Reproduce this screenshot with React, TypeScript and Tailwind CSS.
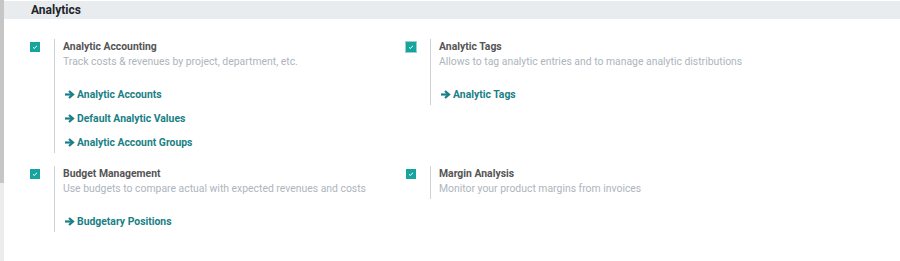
import React from "react";

type Setting = {
  title: string;
  desc: string;
  links: string[];
  focused?: boolean;
};

const rows: Setting[][] = [
  [
    {
      title: "Analytic Accounting",
      desc: "Track costs & revenues by project, department, etc.",
      links: ["Analytic Accounts", "Default Analytic Values", "Analytic Account Groups"],
    },
    {
      title: "Analytic Tags",
      desc: "Allows to tag analytic entries and to manage analytic distributions",
      links: ["Analytic Tags"],
      focused: true,
    },
  ],
  [
    {
      title: "Budget Management",
      desc: "Use budgets to compare actual with expected revenues and costs",
      links: ["Budgetary Positions"],
    },
    {
      title: "Margin Analysis",
      desc: "Monitor your product margins from invoices",
      links: [],
    },
  ],
];

function Checkbox({ focused }: { focused?: boolean }) {
  return (
    <div
      className={`flex h-[10px] w-[10px] items-center justify-center bg-[#17a39e] ${
        focused ? "outline outline-1 outline-offset-0 outline-[#9ccfd0]" : ""
      }`}
    >
      <svg width="6" height="6" viewBox="0 0 6 6">
        <path d="M1 3.4 L2.3 4.4 L5 1.8" stroke="white" strokeWidth="1" fill="none" />
      </svg>
    </div>
  );
}

function Arrow() {
  return (
    <svg width="10" height="9" viewBox="0 0 10 9" className="mr-[2px] shrink-0">
      <path d="M0 3.4 H6.5 V5.6 H0 Z" fill="#1a7f86" />
      <path d="M4.7 0.3 L9.7 4.5 L4.7 8.7 L3.3 7.3 L6.3 4.5 L3.3 1.7 Z" fill="#1a7f86" />
    </svg>
  );
}

function SettingBox({ s }: { s: Setting }) {
  return (
    <div className="flex items-start">
      <div className="w-[24px] pt-[3px]">
        <Checkbox focused={s.focused} />
      </div>
      <div className="border-l border-[#ced4da] pl-[8px] pb-[3px] pr-2">
        <div className="text-[10.4px] font-bold leading-[15px] text-[#555555]">{s.title}</div>
        <div className="text-[10.4px] leading-[15px] text-[#adb5bd]">{s.desc}</div>
        {s.links.length > 0 && (
          <div className="mt-[18px] flex flex-col gap-[9px]">
            {s.links.map((l) => (
              <div key={l} className="ml-[2px] flex items-center text-[10.4px] font-bold leading-[15px] text-[#1a7f86]">
                <Arrow />
                {l}
              </div>
            ))}
          </div>
        )}
      </div>
    </div>
  );
}

export default function App() {
  return (
    <div className="flex h-[261px] w-[900px] overflow-hidden bg-white" style={{ fontFamily: "Roboto, 'Noto Sans', sans-serif" }}>
      {/* scrollbar strip */}
      <div className="flex w-[4px] flex-col">
        <div className="h-[183px] bg-[#c6c6c6]" />
        <div className="flex-1 bg-[#ececec]" />
      </div>

      <div className="flex-1">
        <div className="mt-[1px] h-[18px] bg-[#e9ecef] pl-[27px] text-[12px] font-bold leading-[18px] text-[#212529]">
          Analytics
        </div>

        <div className="mt-[20px] flex flex-col gap-[13px] pl-[26px]">
          {rows.map((row, i) => (
            <div key={i} className="grid grid-cols-[376px_1fr] items-start">
              {row.map((s) => (
                <SettingBox key={s.title} s={s} />
              ))}
            </div>
          ))}
        </div>
      </div>
    </div>
  );
}
